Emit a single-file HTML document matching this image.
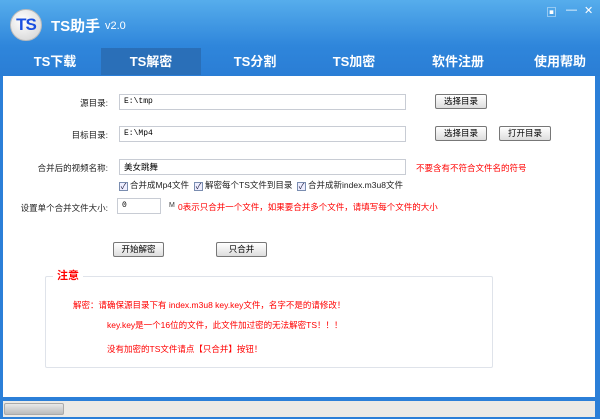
<!DOCTYPE html>
<html><head><meta charset="utf-8"><style>
*{margin:0;padding:0;box-sizing:border-box}
body{width:600px;height:419px;overflow:hidden;font-family:"Liberation Sans","Noto Sans CJK SC",sans-serif;font-size:8.5px;background:#2b7fd8;position:relative}
.top{position:absolute;left:0;top:0;width:600px;height:76px;background:linear-gradient(#56adec,#2f86db 60%,#2a7dd5)}
.logo{position:absolute;left:10px;top:9px;width:32px;height:32px;border-radius:50%;background:radial-gradient(circle at 40% 35%,#fff,#d0d0d0);border:1px solid #bbb;color:#1a4fe0;font-weight:bold;font-size:17px;line-height:30px;text-align:center;letter-spacing:-1px}
.title{position:absolute;left:51px;top:15px;color:#fff;font-weight:bold;font-size:15px}
.ver{position:absolute;left:105px;top:20px;color:#fff;font-size:11px}
.tab{position:absolute;top:48px;height:27px;width:100px;color:#fff;font-weight:bold;font-size:13px;text-align:center;line-height:27px}
.tab.a{background:#2a6fb8}
.ctl{position:absolute;top:4px;color:#fff;font-size:11px}
.main{position:absolute;left:3px;top:76px;width:592px;height:321px;background:#fff}
.a{position:absolute;white-space:nowrap}
.lbl{font-size:8.5px;color:#222}
.r{text-align:right;width:100px;left:8px}
.inp{position:absolute;border:1px solid #c8ccd4;background:#fff;height:16px;font-family:"Liberation Mono","Noto Sans CJK SC",monospace;font-size:8px;padding-left:4px;line-height:14px;color:#000}
.btn{position:absolute;height:15px;border:1px solid #777;border-radius:2px;background:linear-gradient(#fff,#ddd);font-size:8.5px;text-align:center;line-height:13px;color:#000}
.red{color:#f00;font-size:8.5px}
.cb{display:inline-block;width:9px;height:9px;border:1px solid #7a8db0;background:#eef;vertical-align:-1px;margin-right:2px;font-size:8px;line-height:7px;color:#224;text-align:center}
.fs{position:absolute;left:45px;top:276px;width:448px;height:92px;border:1px solid #dfe3ea;border-radius:2px}
.bot{position:absolute;left:0;top:398px;width:600px;height:21px;background:#2b7fd8}
.sb{position:absolute;left:3px;top:401px;width:592px;height:16px;background:#eceae6}
.th{position:absolute;left:4px;top:403px;width:60px;height:12px;background:linear-gradient(#e8e8e8,#bcbcbc);border:1px solid #aaa;border-radius:2px}
</style></head><body>
<div class="top"></div>
<div class="logo">TS</div>
<div class="title">TS助手</div>
<div class="ver">v2.0</div>
<div class="ctl" style="left:546px">▣</div>
<div class="ctl" style="left:566px">—</div>
<div class="ctl" style="left:584px">✕</div>
<div class="tab" style="left:5px">TS下载</div>
<div class="tab a" style="left:101px">TS解密</div>
<div class="tab" style="left:205px">TS分割</div>
<div class="tab" style="left:304px">TS加密</div>
<div class="tab" style="left:408px">软件注册</div>
<div class="tab" style="left:510px">使用帮助</div>
<div class="main"></div>
<div class="a lbl r" style="top:97px">源目录:</div>
<div class="inp" style="left:119px;top:94px;width:287px">E:\tmp</div>
<div class="btn" style="left:435px;top:94px;width:52px">选择目录</div>
<div class="a lbl r" style="top:129px">目标目录:</div>
<div class="inp" style="left:119px;top:126px;width:287px">E:\Mp4</div>
<div class="btn" style="left:435px;top:126px;width:52px">选择目录</div>
<div class="btn" style="left:499px;top:126px;width:52px">打开目录</div>
<div class="a lbl r" style="top:162px">合并后的视频名称:</div>
<div class="inp" style="left:119px;top:159px;width:287px;font-family:'Liberation Sans','Noto Sans CJK SC',sans-serif;font-size:8.5px">美女跳舞</div>
<div class="a red" style="left:416px;top:162px">不要含有不符合文件名的符号</div>
<div class="a lbl" style="left:119px;top:179px"><span class="cb">✓</span>合并成Mp4文件</div>
<div class="a lbl" style="left:194px;top:179px"><span class="cb">✓</span>解密每个TS文件到目录</div>
<div class="a lbl" style="left:297px;top:179px"><span class="cb">✓</span>合并成新index.m3u8文件</div>
<div class="a lbl r" style="top:202px">设置单个合并文件大小:</div>
<div class="inp" style="left:117px;top:198px;width:44px;height:16px">0</div>
<div class="a" style="left:169px;top:202px;font-size:7px;color:#333">M</div>
<div class="a red" style="left:178px;top:201px">0表示只合并一个文件，如果要合并多个文件，请填写每个文件的大小</div>
<div class="btn" style="left:113px;top:242px;width:51px">开始解密</div>
<div class="btn" style="left:216px;top:242px;width:51px">只合并</div>
<div class="fs"></div>
<div class="a" style="left:53px;top:267px;background:#fff;padding:0 4px;color:#f00;font-weight:bold;font-size:11px">注意</div>
<div class="a red" style="left:73px;top:299px">解密：请确保源目录下有 index.m3u8  key.key文件，名字不是的请修改！</div>
<div class="a red" style="left:107px;top:319px">key.key是一个16位的文件，此文件加过密的无法解密TS！！！</div>
<div class="a red" style="left:107px;top:343px">没有加密的TS文件请点【只合并】按钮！</div>
<div class="bot"></div>
<div class="sb"></div>
<div class="th"></div>
</body></html>
